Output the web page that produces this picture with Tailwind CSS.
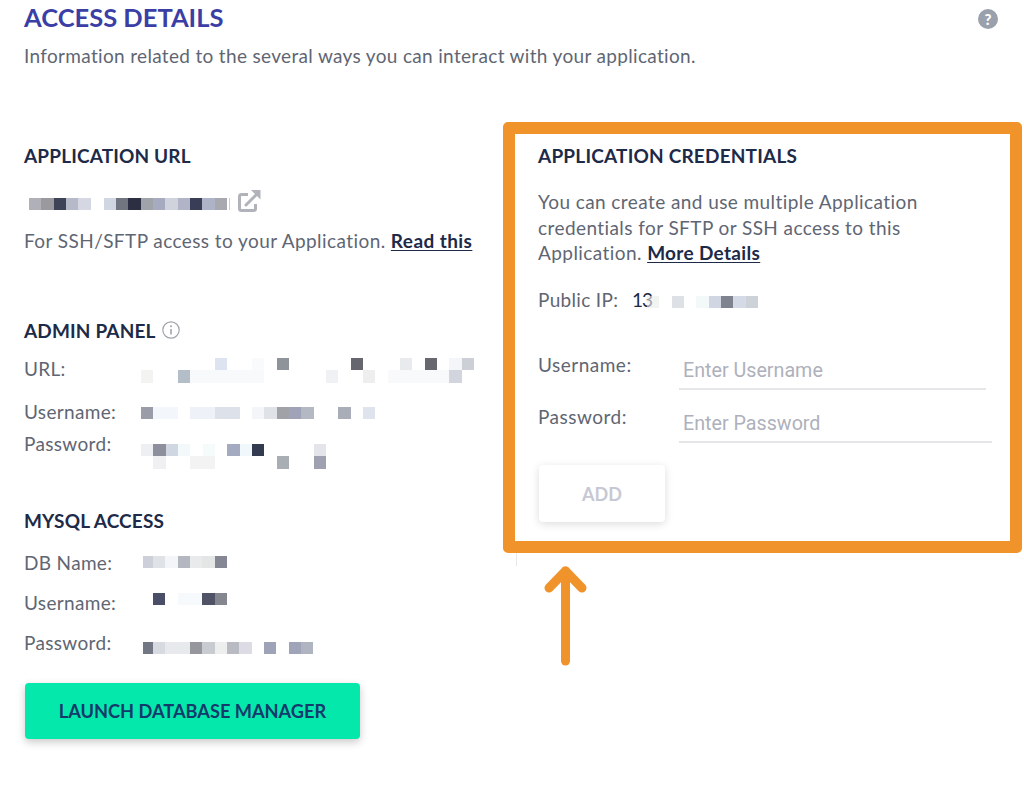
<!DOCTYPE html>
<html lang="en">
<head>
<meta charset="utf-8">
<title>Access Details</title>
<script src="https://cdn.jsdelivr.net/npm/@tailwindcss/browser@4"></script>
</head>
<body class="bg-white">
<div class="relative w-[1024px] h-[795px] overflow-hidden bg-white font-['Lato','Liberation_Sans',sans-serif] text-[19px] tracking-[0.33px] text-[#5f6673]">

  <header class="h-[122px] pl-6 pr-[26px] pt-[3px] relative">
    <div class="flex justify-between items-start">
      <h1 class="text-[25.5px] leading-[28px] tracking-normal font-bold text-[#3b3fa5]">ACCESS DETAILS</h1>
      <div class="mt-[6px] w-5 h-5 rounded-full bg-[#9aa0ac] text-white text-[15px] tracking-normal leading-5 font-black text-center">?</div>
    </div>
    <p class="mt-[13px] leading-6">Information related to the several ways you can interact with your application.</p>
  </header>

  <main class="flex items-start">
    <section class="w-[503px] pl-6">
      <h2 class="mt-[22px] h-6 leading-6 tracking-[0.15px] font-bold text-[#1d2a48]">APPLICATION URL</h2>
      <div class="mt-[22px] h-6 flex items-start">
        <div class="mt-2 ml-[5px] flex h-[12.33px]">
          <div class="w-[12.33px] bg-[#b0b0b8]"></div><div class="w-[12.33px] bg-[#9a9a9e]"></div><div class="w-[12.33px] bg-[#3f4358]"></div><div class="w-[12.33px] bg-[#b5b9c8]"></div><div class="w-[12.33px] bg-[#d5d8e2]"></div>
          <div class="w-[13px]"></div>
          <div class="w-[12.33px] bg-[#d0d6e2]"></div><div class="w-[12.33px] bg-[#70757f]"></div><div class="w-[12.33px] bg-[#2c2e42]"></div><div class="w-[12.33px] bg-[#a0a3aa]"></div><div class="w-[12.33px] bg-[#a6abc0]"></div><div class="w-[12.33px] bg-[#d0d3dc]"></div><div class="w-[12.33px] bg-[#b0b4c6]"></div><div class="w-[12.33px] bg-[#393d56]"></div><div class="w-[12.33px] bg-[#aeb3c8]"></div><div class="w-[12.33px] bg-[#a8a9ae]"></div>
          <div class="ml-[2px] w-px bg-[#cccccc]"></div>
        </div>
        <svg class="ml-[7px] w-6 h-6 -mt-px" viewBox="0 0 24 24" fill="none" stroke="#b0b3ba" stroke-width="3">
          <path d="M11 5.5H4.5a2 2 0 0 0-2 2v12a2 2 0 0 0 2 2h12a2 2 0 0 0 2-2V15"/>
          <path d="M9 16 20 5" stroke-linecap="round"/>
          <path d="M14 1h9.5v9.5z" fill="#b0b3ba" stroke="none"/>
        </svg>
      </div>
      <p class="mt-[15px] h-6 leading-6 tracking-[0.42px] whitespace-nowrap">For SSH/SFTP access to your Application. <a class="font-bold text-[#1d2a48] underline underline-offset-2" href="#">Read this</a></p>

      <h2 class="mt-[66px] h-6 leading-6 tracking-[0.15px] font-bold text-[#1d2a48] flex items-center gap-[6px]">ADMIN PANEL
        <svg class="w-[18px] h-[18px] -mt-[3px]" viewBox="0 0 18 18" fill="none" stroke="#a0a4aa" stroke-width="1.2"><circle cx="9" cy="9" r="8.2"/><path d="M9 8v5.5" stroke-width="1.6"/><circle cx="9" cy="5.2" r="1" fill="#a0a4aa" stroke="none"/></svg>
      </h2>
      <div class="mt-[15px] h-6 flex items-start">
        <span class="w-[117px] leading-6 -mt-px">URL:</span>
        <div class="grid grid-cols-[repeat(28,12.33px)] grid-rows-[12.33px_12.33px]">
          <div class="row-start-1 col-start-7 bg-[#dde3f0]"></div><div class="row-start-1 col-start-10 bg-[#f8fafc]"></div><div class="row-start-1 col-start-12 bg-[#8f939a]"></div><div class="row-start-1 col-start-18 bg-[#66666e]"></div><div class="row-start-1 col-start-22 bg-[#e8eaed]"></div><div class="row-start-1 col-start-24 bg-[#66686e]"></div><div class="row-start-1 col-start-26 bg-[#f3f5f8]"></div><div class="row-start-1 col-start-27 bg-[#cdcfd6]"></div>
          <div class="row-start-2 col-start-1 bg-[#f3f3f2]"></div><div class="row-start-2 col-start-4 bg-[#b4bec8]"></div><div class="row-start-2 col-start-5 col-span-6 bg-[#f7f9fb]"></div><div class="row-start-2 col-start-16 bg-[#eff1f5]"></div><div class="row-start-2 col-start-19 bg-[#eeeeee]"></div><div class="row-start-2 col-start-21 col-span-5 bg-[#f7f9fb]"></div><div class="row-start-2 col-start-26 bg-[#d2d4de]"></div>
        </div>
      </div>
      <div class="mt-[19px] h-6 flex items-start">
        <span class="w-[117px] leading-6 -mt-px">Username:</span>
        <div class="mt-[6px] grid grid-cols-[repeat(28,12.33px)] grid-rows-[12.33px]">
          <div class="col-start-1 bg-[#9a9ca8]"></div><div class="col-start-2 col-span-2 bg-[#f3f7fb]"></div><div class="col-start-5 col-span-2 bg-[#eef1f7]"></div><div class="col-start-7 col-span-2 bg-[#dde1ea]"></div><div class="col-start-10 bg-[#f3f5f8]"></div><div class="col-start-11 bg-[#dfe2e6]"></div><div class="col-start-12 bg-[#a0a2a8]"></div><div class="col-start-13 bg-[#a0a2b8]"></div><div class="col-start-14 bg-[#b4b8c2]"></div><div class="col-start-17 bg-[#a9adb8]"></div><div class="col-start-19 bg-[#dfe4ec]"></div>
        </div>
      </div>
      <div class="mt-2 h-6 flex items-start">
        <span class="w-[117px] leading-6 -mt-px">Password:</span>
        <div class="mt-[11px] grid grid-cols-[repeat(28,12.33px)] grid-rows-[12.33px_12.33px]">
          <div class="row-start-1 col-start-1 bg-[#eeeff2]"></div><div class="row-start-1 col-start-2 bg-[#8e8f9c]"></div><div class="row-start-1 col-start-3 bg-[#d0d6e2]"></div><div class="row-start-1 col-start-4 bg-[#f3f8fb]"></div><div class="row-start-1 col-start-6 bg-[#f5fafb]"></div><div class="row-start-1 col-start-8 bg-[#a4abc0]"></div><div class="row-start-1 col-start-9 bg-[#f1f8fc]"></div><div class="row-start-1 col-start-10 bg-[#333b50]"></div><div class="row-start-1 col-start-15 bg-[#e3e5ea]"></div>
          <div class="row-start-2 col-start-2 bg-[#f0f0f3]"></div><div class="row-start-2 col-start-5 col-span-2 bg-[#f3f3f3]"></div><div class="row-start-2 col-start-12 bg-[#a8aeb4]"></div><div class="row-start-2 col-start-15 bg-[#9fa1b0]"></div>
        </div>
      </div>

      <h2 class="mt-[52px] h-6 leading-6 tracking-[0.15px] font-bold text-[#1d2a48]">MYSQL ACCESS</h2>
      <div class="mt-[18px] h-6 flex items-start">
        <span class="w-[119px] leading-6">DB Name:</span>
        <div class="mt-[5px] grid grid-cols-[10px_repeat(7,12.33px)] grid-rows-[12.33px]">
          <div class="bg-[#cdd0d8]"></div><div class="bg-[#dfe2e6]"></div><div class="bg-[#f3f5f8]"></div><div class="bg-[#b4b6c0]"></div><div class="bg-[#e8eaec]"></div><div class="bg-[#e4e6e6]"></div><div class="bg-[#858894]"></div>
        </div>
      </div>
      <div class="mt-4 h-6 flex items-start">
        <span class="w-[119px] leading-6">Username:</span>
        <div class="mt-[2px] grid grid-cols-[10px_repeat(7,12.33px)] grid-rows-[12.33px]">
          <div class="col-start-2 bg-[#4a4e66]"></div><div class="col-start-4 col-span-2 bg-[#f6fafc]"></div><div class="col-start-6 bg-[#505266]"></div><div class="col-start-7 bg-[#84878f]"></div>
        </div>
      </div>
      <div class="mt-4 h-6 flex items-start">
        <span class="w-[119px] leading-6">Password:</span>
        <div class="mt-[11px] grid grid-cols-[10px_repeat(14,12.33px)] grid-rows-[12.33px]">
          <div class="bg-[#737784]"></div><div class="bg-[#d8dae2]"></div><div class="bg-[#e8e9ec]"></div><div class="bg-[#e8e9ec]"></div><div class="bg-[#96979c]"></div><div class="bg-[#c8cbcf]"></div><div class="bg-[#eeeeee]"></div><div class="bg-[#b8bcc2]"></div><div class="bg-[#dcdde4]"></div><div class="col-start-11 bg-[#9ea3b8]"></div><div class="col-start-13 bg-[#a0a4b8]"></div><div class="col-start-14 bg-[#b0b4c0]"></div>
        </div>
      </div>
      <button class="mt-7 ml-px block w-[335px] h-[56px] pt-[2px] rounded-[4px] bg-[#05e8ac] shadow-[0_3px_8px_rgba(0,0,0,0.22)] font-bold text-[18.2px] tracking-normal text-[#123a6b]">LAUNCH DATABASE MANAGER</button>
    </section>

    <section class="w-[519px] h-[431px] border-[12px] border-[#f0932b] rounded-[5px] pl-[23px]">
      <h2 class="mt-[10px] h-6 leading-6 tracking-[0.2px] font-bold text-[#1d2a48]">APPLICATION CREDENTIALS</h2>
      <p class="mt-[21px] w-[410px] leading-[25.5px] tracking-[0.42px]">You can create and use multiple Application credentials for SFTP or SSH access to this Application. <a class="font-bold text-[#1d2a48] underline underline-offset-2 tracking-[0.33px]" href="#">More Details</a></p>
      <div class="mt-[23px] h-6 flex items-start">
        <span class="w-[94px] leading-6 -mt-px">Public IP:</span>
        <span class="w-[15px] whitespace-nowrap leading-6 -mt-px tracking-[-1px] text-[#1d2a48]">13</span>
        <div class="relative mt-[7px] grid grid-cols-[repeat(9,12.33px)] grid-rows-[12.33px]">
          <div class="col-start-1 bg-[#e9edea]/60"></div><div class="col-start-3 bg-[#dde0e4]"></div><div class="col-start-5 bg-[#f3f8f9]"></div><div class="col-start-6 bg-[#d0d6e2]"></div><div class="col-start-7 bg-[#7f828f]"></div><div class="col-start-8 bg-[#d4dae6]"></div><div class="col-start-9 bg-[#ccd2d8]"></div>
        </div>
      </div>
      <div class="mt-10 h-[37px] flex items-start">
        <label class="w-[141px] leading-6 tracking-[0.5px]">Username:</label>
        <input class="w-[307px] h-[37px] pl-[4px] pt-[5px] pb-[4px] border-b-2 border-[#e6e6e8] font-['Roboto',sans-serif] text-[19.7px] tracking-normal outline-none placeholder:text-[#aeb1bb]" placeholder="Enter Username">
      </div>
      <div class="mt-[16px] h-[37px] flex items-start">
        <label class="w-[141px] leading-6 tracking-[0.5px] -mt-px">Password:</label>
        <input class="w-[313px] h-[37px] pl-[4px] pt-[5px] pb-[4px] border-b-2 border-[#e6e6e8] font-['Roboto',sans-serif] text-[19.7px] tracking-normal outline-none placeholder:text-[#aeb1bb]" placeholder="Enter Password">
      </div>
      <button class="mt-[22px] ml-px block w-[126px] h-[57px] pt-[2px] rounded-[4px] bg-white shadow-[0_2px_8px_rgba(0,0,0,0.14)] font-bold text-[18px] tracking-normal text-[#c6c8d4]">ADD</button>
    </section>
  </main>

  <div class="absolute left-[516px] top-[553px] w-px h-[13px] bg-[#e8e8e8]"></div>
  <svg class="absolute left-[540px] top-[562px] w-[50px] h-[108px]" viewBox="0 0 50 108" fill="none" stroke="#f0932b" stroke-width="9" stroke-linecap="round" stroke-linejoin="round">
    <path d="M25.5 9V99"/>
    <path d="M9 26 25.5 9 42 26"/>
  </svg>
</div>
</body>
</html>
